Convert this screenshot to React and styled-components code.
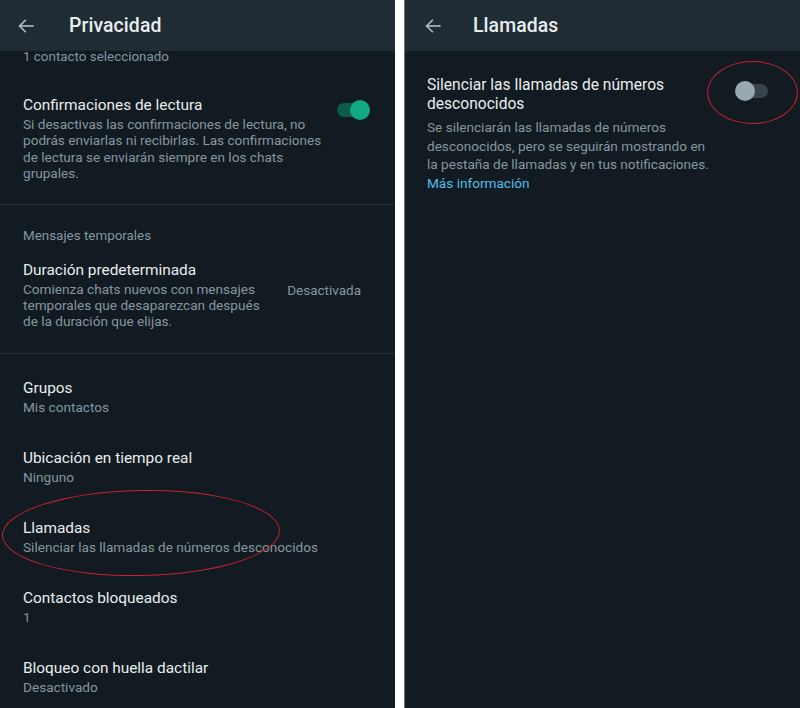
import React from "react";
import styled, {createGlobalStyle} from "styled-components";

const Global = createGlobalStyle`
  html, body {
    margin: 0;
    padding: 0;
    background: #ffffff;
  }
  body {
    font-family: Roboto, "Noto Sans", "Liberation Sans", sans-serif;
    -webkit-font-smoothing: antialiased;
  }
`;

const Page = styled.div`
  display: flex;
  width: 800px;
  height: 708px;
  background: #ffffff;
  overflow: hidden;
`;

const Panel = styled.div`
  position: relative;
  display: flex;
  flex-direction: column;
  width: ${p => p.width}px;
  height: 708px;
  background: #111b21;
  border-left: ${p => (p.bordered ? "1px solid #6b7378" : "none")};
  margin-left: ${p => p.offset || 0}px;
  overflow: hidden;
`;

const Header = styled.div`
  display: flex;
  align-items: center;
  height: 51px;
  flex-shrink: 0;
  background: #1f2c34;
  padding-left: ${p => p.pad}px;
  box-sizing: border-box;
`;

const Back = styled.svg`
  width: 18px;
  height: 18px;
  margin-right: ${p => p.gap}px;
`;

const Title = styled.div`
  color: #e9edef;
  font-size: 19.4px;
  font-weight: 500;
  letter-spacing: 0.1px;
`;

const Body = styled.div`
  display: flex;
  flex-direction: column;
  padding: 0 ${p => p.padRight || 24}px 0 ${p => p.padLeft}px;
`;

const Section = styled.div`
  display: flex;
  flex-direction: column;
  padding-top: ${p => p.top}px;
  padding-bottom: ${p => p.bottom}px;
  padding-left: 23px;
  padding-right: 25px;
  border-bottom: ${p => (p.divider ? "1px solid #222d35" : "none")};
`;

const Row = styled.div`
  display: flex;
  align-items: ${p => p.align || "center"};
  justify-content: space-between;
  padding-top: ${p => p.top || 0}px;
  height: ${p => (p.h ? `${p.h}px` : "auto")};
  box-sizing: border-box;
`;

const TextCol = styled.div`
  display: flex;
  flex-direction: column;
`;

const ItemTitle = styled.div`
  color: #e9edef;
  font-size: ${p => p.size || 15.4}px;
  line-height: ${p => p.lh || 20}px;
  white-space: nowrap;
`;

const ItemSub = styled.div`
  color: #8696a0;
  font-size: ${p => p.size || 13.6}px;
  line-height: ${p => p.lh || 16.4}px;
  margin-top: ${p => p.mt || 1}px;
  white-space: nowrap;
`;

const SectionLabel = styled.div`
  color: #8696a0;
  font-size: 13.4px;
  line-height: ${p => p.lh || 16}px;
`;

const Value = styled.div`
  color: #8696a0;
  font-size: 13.5px;
  margin-top: 22px;
  margin-right: 9px;
`;

const Link = styled.span`
  color: #53bdeb;
`;

const Track = styled.div`
  position: relative;
  width: 30px;
  height: 14px;
  border-radius: 7px;
  background: ${p => (p.on ? "#0d5c4a" : "#37444d")};
  margin-top: ${p => p.mt || 0}px;
  margin-right: ${p => p.mr || 0}px;
  flex-shrink: 0;
`;

const Thumb = styled.div`
  position: absolute;
  top: -3px;
  left: ${p => (p.on ? "13px" : "-3px")};
  width: 20px;
  height: 20px;
  border-radius: 50%;
  background: ${p => (p.on ? "#12a884" : "#9aa8b1")};
`;

const Ring = styled.div`
  position: absolute;
  left: ${p => p.x}px;
  top: ${p => p.y}px;
  width: ${p => p.w}px;
  height: ${p => p.h}px;
  border: 1.5px solid #cc2230;
  border-radius: 50%;
  transform: rotate(${p => p.rot || 0}deg);
  pointer-events: none;
`;

const Arrow = ({gap}) => (
    <Back gap={gap} viewBox="0 0 24 24" fill="none" stroke="#aebac1" strokeWidth="2.2" strokeLinecap="square">
        <path d="M21 12H4"/>
        <path d="M11 4.5L3.5 12L11 19.5"/>
    </Back>
);

const Toggle = ({on, mt, mr}) => (
    <Track on={on} mt={mt} mr={mr}>
        <Thumb on={on}/>
    </Track>
);

const Item = ({title, sub}) => (
    <Row h={70} top={24} align="flex-start">
        <TextCol>
            <ItemTitle>{title}</ItemTitle>
            <ItemSub lh={16}>{sub}</ItemSub>
        </TextCol>
    </Row>
);

const items = [
    {title: "Grupos", sub: "Mis contactos"},
    {title: "Ubicación en tiempo real", sub: "Ninguno"},
    {title: "Llamadas", sub: "Silenciar las llamadas de números desconocidos"},
    {title: "Contactos bloqueados", sub: "1"},
    {title: "Bloqueo con huella dactilar", sub: "Desactivado"},
];

export default function App() {
    return (
        <Page>
            <Global/>
            <Panel width={395}>
                <Header pad={17}>
                    <Arrow gap={34}/>
                    <Title>Privacidad</Title>
                </Header>

                <Section top={0} bottom={22} divider>
                    <SectionLabel lh={12}>1 contacto seleccionado</SectionLabel>
                    <Row top={32} align="flex-start">
                        <TextCol>
                            <ItemTitle>Confirmaciones de lectura</ItemTitle>
                            <ItemSub>
                                Si desactivas las confirmaciones de lectura, no<br/>
                                podrás enviarlas ni recibirlas. Las confirmaciones<br/>
                                de lectura se enviarán siempre en los chats<br/>
                                grupales.
                            </ItemSub>
                        </TextCol>
                        <Toggle on mt={8} mr={3}/>
                    </Row>
                </Section>

                <Section top={23} bottom={23} divider>
                    <SectionLabel>Mensajes temporales</SectionLabel>
                    <Row top={16} align="flex-start">
                        <TextCol>
                            <ItemTitle>Duración predeterminada</ItemTitle>
                            <ItemSub>
                                Comienza chats nuevos con mensajes<br/>
                                temporales que desaparezcan después<br/>
                                de la duración que elijas.
                            </ItemSub>
                        </TextCol>
                        <Value>Desactivada</Value>
                    </Row>
                </Section>

                <Section top={0} bottom={0}>
                    {items.map(it => (
                        <Item key={it.title} title={it.title} sub={it.sub}/>
                    ))}
                </Section>

                <Ring x={2} y={490} w={276} h={84} rot={-1}/>
            </Panel>

            <Panel width={395} offset={9} bordered>
                <Header pad={19}>
                    <Arrow gap={31}/>
                    <Title>Llamadas</Title>
                </Header>
                <Body padLeft={22} padRight={32}>
                    <Row top={25} align="flex-start">
                        <TextCol>
                            <ItemTitle size={15.6} lh={18.5}>
                                Silenciar las llamadas de números<br/>
                                desconocidos
                            </ItemTitle>
                            <ItemSub size={13.6} lh={18.6} mt={5}>
                                Se silenciarán las llamadas de números<br/>
                                desconocidos, pero se seguirán mostrando en<br/>
                                la pestaña de llamadas y en tus notificaciones.<br/>
                                <Link>Más información</Link>
                            </ItemSub>
                        </TextCol>
                        <Toggle mt={8}/>
                    </Row>
                </Body>
                <Ring x={302} y={61} w={89} h={61}/>
            </Panel>
        </Page>
    );
}
